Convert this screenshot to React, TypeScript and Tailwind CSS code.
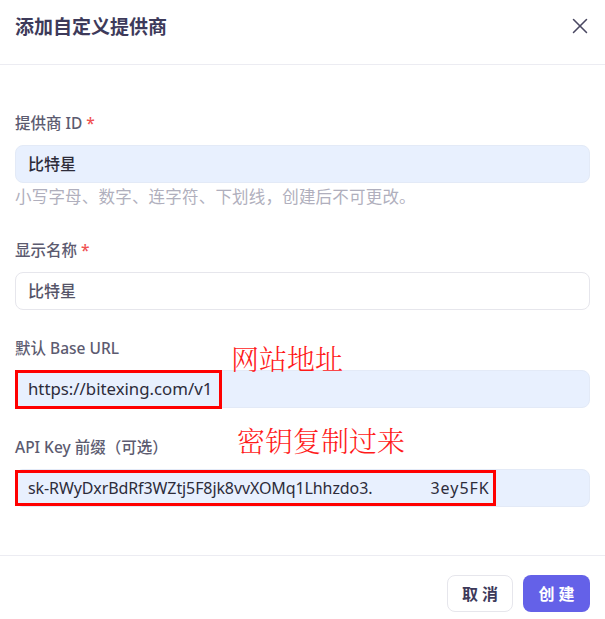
import { X } from "lucide-react";

const font = { fontFamily: '"Noto Sans", "Noto Sans CJK SC", sans-serif' };
const noteFont = { fontFamily: '"Noto Serif CJK SC", "Noto Sans CJK SC", serif' };

function Label({ text, required }: { text: string; required?: boolean }) {
  return (
    <div className="mb-3 text-[15.5px] leading-5 font-medium text-[#5c5b70]">
      {text}
      {required && <span className="ml-1 text-[#f05252]">*</span>}
    </div>
  );
}

export default function App() {
  return (
    <div
      className="relative w-[605px] h-[619px] bg-white flex flex-col"
      style={font}
    >
      <div className="h-[65px] border-b border-[#ececf2] flex items-start justify-between pl-[15px] pr-[12px] pt-[13px]">
        <h2 className="text-[19px] leading-7 font-bold text-[#3d3a5a]">添加自定义提供商</h2>
        <button className="text-[#4a4862]">
          <X className="w-[26px] h-[26px]" strokeWidth={1.4} />
        </button>
      </div>

      <div className="relative flex-1 px-[15px] pt-[48px]">
        <Label text="提供商 ID" required />
        <div className="h-[38px] rounded-lg bg-[#e8f0fe] border border-[#e3eaf7] flex items-center px-3 text-[16px] font-medium text-[#2d2c3a]">
          比特星
        </div>
        <p className="mt-1 text-[16.5px] leading-5 tracking-[0.2px] text-[#b0afbd]">
          小写字母、数字、连字符、下划线，创建后不可更改。
        </p>

        <div className="mt-[33px]">
          <Label text="显示名称" required />
          <div className="h-[38px] rounded-lg bg-white border border-[#e6e6ec] flex items-center px-3 text-[16px] font-medium text-[#555468]">
            比特星
          </div>
        </div>

        <div className="mt-[28px]">
          <Label text="默认 Base URL" />
          <div className="relative h-[38px] rounded-lg bg-[#e8f0fe] border border-[#e3eaf7] flex items-center px-3 text-[16.8px] text-[#2d2c3a]">
            https://bitexing.com/v1
            <div className="absolute left-[-1px] top-[-1px] w-[207px] h-[39px] border-[3px] border-[#ff0000]" />
          </div>
        </div>

        <div className="mt-[29px]">
          <Label text="API Key 前缀（可选）" />
          <div className="relative h-[38px] rounded-lg bg-[#e8f0fe] border border-[#e3eaf7] flex items-center px-3 text-[16px] text-[#2d2c3a] whitespace-nowrap">
            <span className="tracking-[-0.1px]">sk-RWyDxrBdRf3WZtj5F8jk8vvXOMq1Lhhzdo3.</span>
            <span className="inline-block w-[58px]" />
            <span className="tracking-[1px]">3ey5FK</span>
            <div className="absolute left-[-1px] top-0 w-[481px] h-[36px] border-[3px] border-[#ff0000]" />
          </div>
        </div>

        <div
          className="absolute left-[231px] top-[277px] text-[28px] leading-8 font-light text-[#ff1a1a]"
          style={noteFont}
        >
          网站地址
        </div>
        <div
          className="absolute left-[237px] top-[359px] text-[28px] leading-8 font-light text-[#ff1a1a]"
          style={noteFont}
        >
          密钥复制过来
        </div>
      </div>

      <div className="h-[64px] border-t border-[#ececf2] flex justify-end gap-[10px] px-[15px] pt-[19px]">
        <button className="w-[66px] h-[37px] pl-1 rounded-lg border border-[#e6e6ec] bg-white text-[16px] font-bold tracking-[4px] text-[#3d3a5a]">
          取消
        </button>
        <button className="w-[67px] h-[37px] pl-1 rounded-lg bg-[#6461e8] text-[16px] font-bold tracking-[4px] text-white">
          创建
        </button>
      </div>
    </div>
  );
}
